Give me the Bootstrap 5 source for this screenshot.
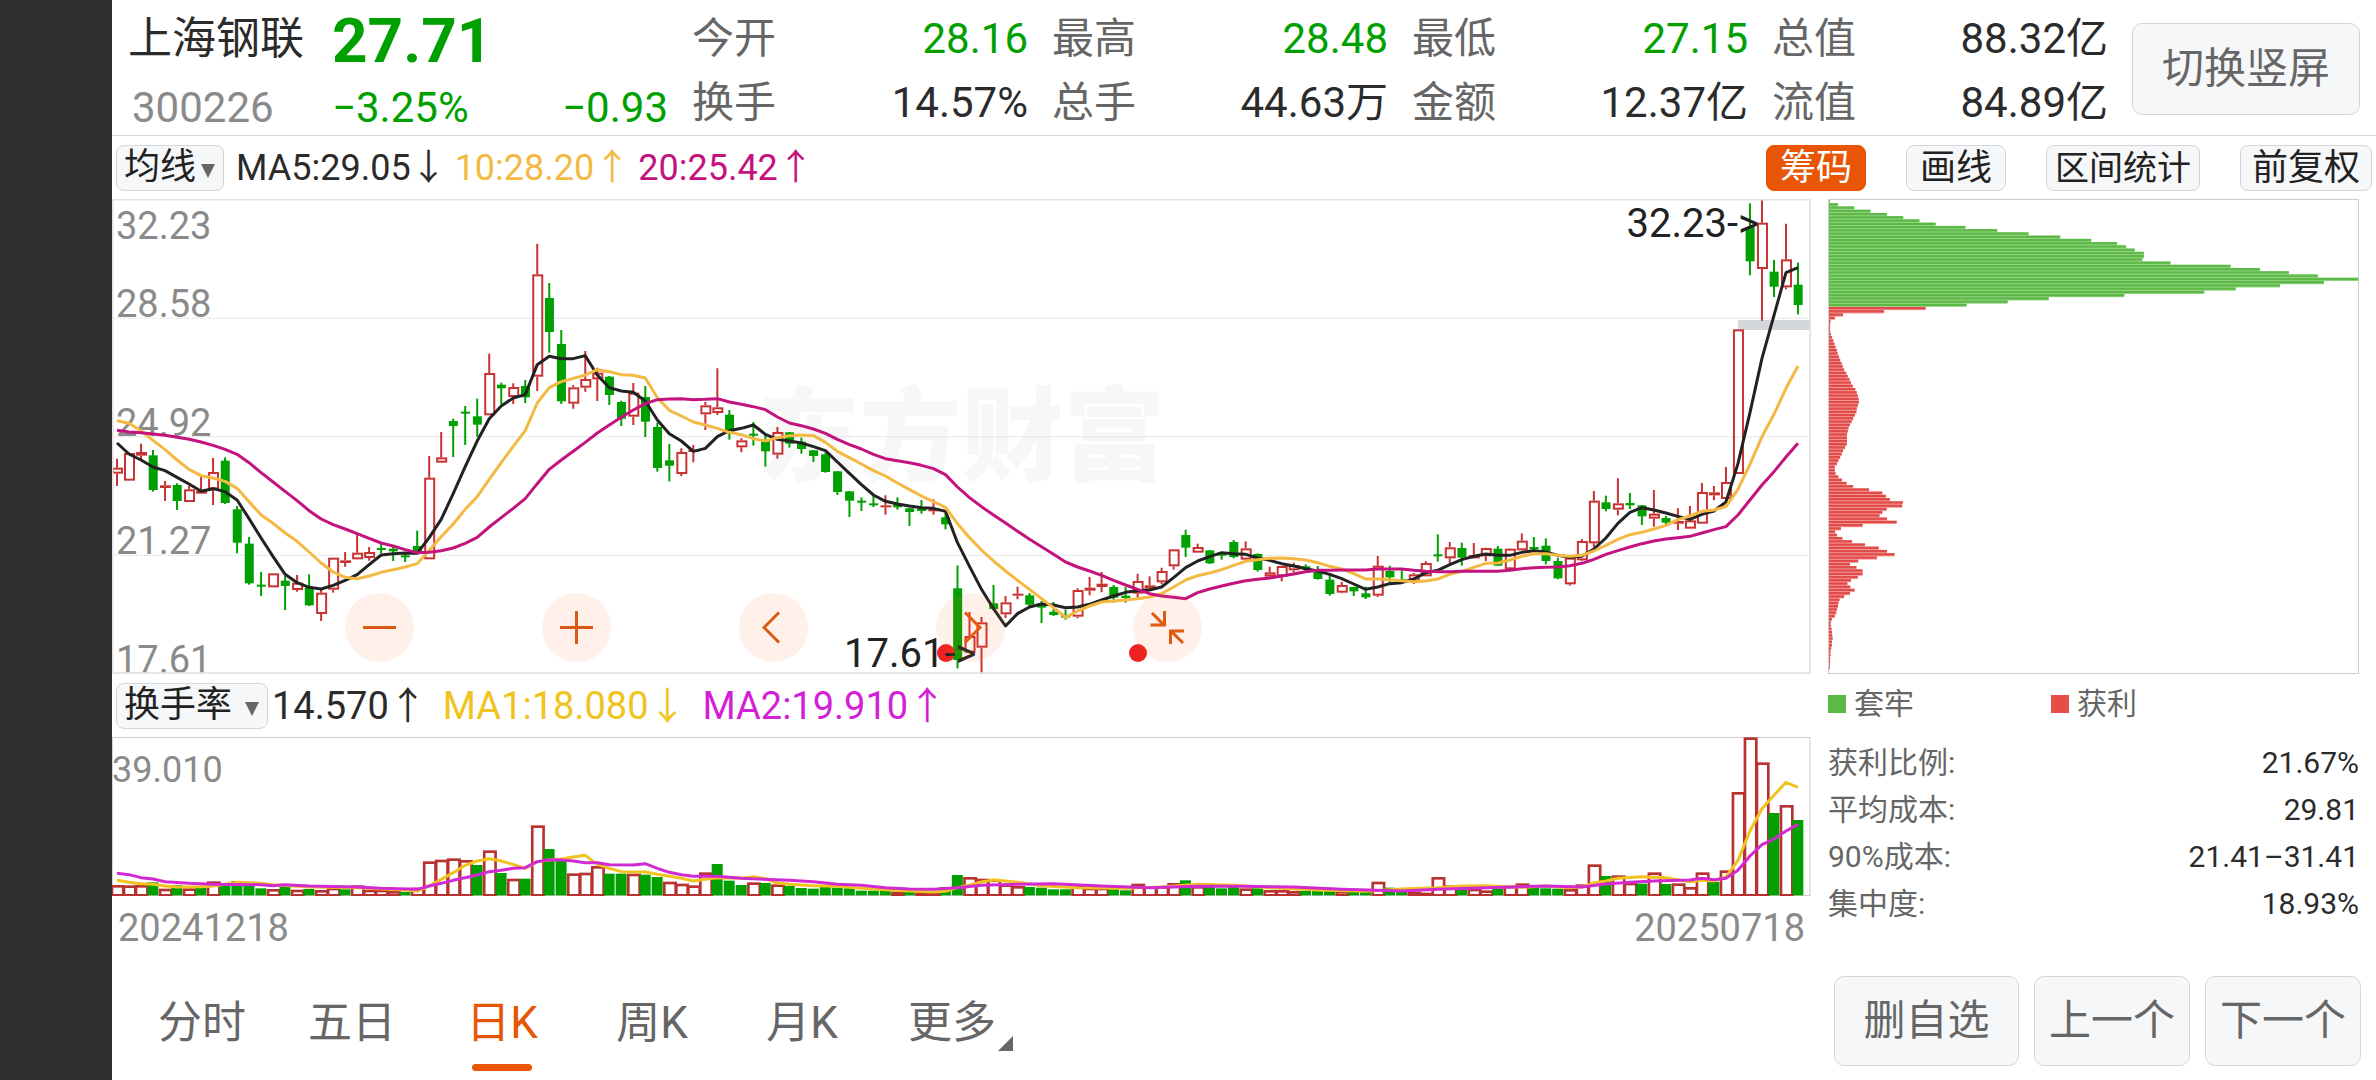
<!DOCTYPE html>
<html lang="zh-CN">
<head>
<meta charset="utf-8">
<meta name="viewport" content="width=device-width, initial-scale=1">
<title>上海钢联 300226</title>
<link rel="stylesheet" href="https://cdn.jsdelivr.net/npm/bootstrap@5.3.0/dist/css/bootstrap.min.css">
<style>
:root { --ink:#2b2b2b; --muted:#666; --axis:#8a8a8a; --down:#00a000; --up:#c83232; --accent:#e85605; }
body { font-family: Roboto, "Noto Sans CJK SC", sans-serif; color: var(--ink); background: #fff; }
.rail { width: 112px; background: #2f2f2f; }
.t-30 { font-size: 30px; line-height: 47px; }
.t-34 { font-size: 34px; }
.t-36 { font-size: 36px; line-height: 44px; }
.t-38 { font-size: 38px; line-height: 44px; }
.t-42 { font-size: 42px; line-height: 64px; }
.t-44 { font-size: 44px; line-height: 64px; }
.c-muted { color: var(--muted); }
.c-axis { color: var(--axis); }
.c-down { color: var(--down); }
.c-ma10 { color: #f4b942; }
.c-ma20 { color: #c4127f; }
.c-v5 { color: #f0c31e; }
.c-v10 { color: #d41fd8; }
.quote { height: 136px; border-bottom: 1px solid #d9d9d9; padding: 7px 16px 0 16px; gap: 24px; }
.q-name { width: 180px; }
.q-name, .q-price { display: flex; flex-direction: column; gap: 5px; }
.q-last { font-size: 62px; line-height: 64px; font-weight: 700; padding-top: 2px; margin-bottom: -2px; }
.q-cell, .q-price { width: 336px; }
.pad { background: #f6f7f9; border: 1px solid #d3d7dc; border-radius: 8px; color: var(--muted); padding: 0; }
.pad:hover { background: #eceef1; }
.pad-lg { border-radius: 10px; height: 92px; }
.w-switch { width: 228px; }
.w-del { width: 185px; }
.w-step { width: 156px; }
.tools { height: 63px; padding-right: 4px; }
.toolset { gap: 40px; }
.ma-gap { margin-right: 12px; }
.pad-sm { height: 46px; color: #222; line-height: 42px; padding: 0 13px; }
.pad-drop { padding: 0 7px; }
.pad-on { background: var(--accent); border-color: var(--accent); color: #fff; }
.pad-tight { padding: 0 8px; }
.pad-mid { padding: 0 11px; }
.plot { height: 475px; }
.plot svg, .vol svg, .chips svg { display: block; width: 100%; height: 100%; }
.vol { height: 159px; }
.vol-top { padding-top: 11px; }
.chips { height: 475px; border: 1px solid #ccc; }
.side { width: 531px; margin: 0 17px 0 17px; }
.axis-y { font-size: 38px; line-height: 28px; padding: 0 4px; }
.axis-first { padding-top: 13px; }
.mark-brand { font-size: 102px; line-height: 102px; font-weight: 900; color: #f7f7f7; left: 38%; top: 188px; }
.tip { font-size: 40px; line-height: 40px; color: #222; }
.tip-high { right: 52px; top: 5px; }
.tip-low { left: 732px; bottom: 0; }
.ctrls { left: 233px; bottom: 12px; gap: 128px; }
.round { width: 69px; height: 69px; border: 0; border-radius: 50%; padding: 0; background: rgba(255,110,40,.1); }
.dot { width: 18px; height: 18px; border-radius: 50%; background: #ee2222; bottom: 12px; }
.dot-a { left: 825px; }
.dot-b { left: 1017px; }
.subtools { height: 63px; padding: 0 4px; }
.w-legend { width: 223px; }
.legend-row { padding-top: 6px; }
.key { width: 18px; height: 18px; }
.key-g { background: #5cb946; }
.key-r { background: #e84c49; }
.facts { padding-top: 12px; }
.facts dt { font-weight: 400; }
.facts dd { margin: 0; }
.tab-k { width: 150px; border: 0; background: none; color: var(--muted); padding: 0; }
.tab-k.active { color: var(--accent); }
.tab-k .bar { width: 60px; height: 7px; border-radius: 4px; background: var(--accent); bottom: -16px; left: 45px; }
.tab-k .corner { right: 14px; bottom: 4px; }
.foot { padding: 0 15px; gap: 15px; height: 119px; }
.h-90 { height: 90px; }
.dates { height: 65px; padding: 10px 6px 0; }
</style>
</head>
<body>
<div class="d-flex min-vh-100">
  <div class="rail flex-shrink-0"></div>
  <div class="d-flex flex-column flex-grow-1">

    <header class="quote d-flex">
      <div class="q-name">
        <div class="t-44">上海钢联</div>
        <div class="t-42 c-axis ps-1">300226</div>
      </div>
      <div class="q-price c-down me-auto">
        <div class="q-last">27.71</div>
        <div class="t-42 d-flex justify-content-between"><span>−3.25%</span><span>−0.93</span></div>
      </div>
      <div class="q-cell t-42">
        <div class="d-flex justify-content-between"><span class="c-muted">今开</span><span class="c-down">28.16</span></div>
        <div class="d-flex justify-content-between"><span class="c-muted">换手</span><span>14.57%</span></div>
      </div>
      <div class="q-cell t-42">
        <div class="d-flex justify-content-between"><span class="c-muted">最高</span><span class="c-down">28.48</span></div>
        <div class="d-flex justify-content-between"><span class="c-muted">总手</span><span>44.63万</span></div>
      </div>
      <div class="q-cell t-42">
        <div class="d-flex justify-content-between"><span class="c-muted">最低</span><span class="c-down">27.15</span></div>
        <div class="d-flex justify-content-between"><span class="c-muted">金额</span><span>12.37亿</span></div>
      </div>
      <div class="q-cell t-42">
        <div class="d-flex justify-content-between"><span class="c-muted">总值</span><span>88.32亿</span></div>
        <div class="d-flex justify-content-between"><span class="c-muted">流值</span><span>84.89亿</span></div>
      </div>
      <button type="button" class="pad pad-lg w-switch t-42 mt-3">切换竖屏</button>
    </header>

    <div class="tools d-flex align-items-center justify-content-between">
      <div class="d-flex align-items-center t-36 ps-1">
        <button type="button" class="pad pad-sm pad-drop ma-gap">均线<svg class="ms-1" width="16" height="38" viewBox="0 0 16 38"><path d="M1 13h14l-7 14z" fill="#666"/></svg></button>
        <span class="me-2">MA5:29.05↓</span>
        <span class="me-2 c-ma10">10:28.20↑</span>
        <span class="c-ma20">20:25.42↑</span>
      </div>
      <div class="d-flex align-items-center t-36 toolset">
        <button type="button" class="pad pad-sm pad-on">筹码</button>
        <button type="button" class="pad pad-sm">画线</button>
        <button type="button" class="pad pad-sm pad-tight t-34">区间统计</button>
        <button type="button" class="pad pad-sm pad-mid">前复权</button>
      </div>
    </div>

    <div class="d-flex">
      <div class="flex-grow-1">
        <div class="plot position-relative">
          <div class="mark-brand position-absolute text-nowrap">东方财富</div>
          <div class="axis-y c-axis position-absolute top-0 start-0 h-100 d-flex flex-column">
            <div class="d-flex flex-column justify-content-between h-25 axis-first"><span>32.23</span><span>28.58</span></div>
            <div class="d-flex align-items-end h-25">24.92</div>
            <div class="d-flex align-items-end h-25">21.27</div>
            <div class="d-flex align-items-end h-25">17.61</div>
          </div>
          <svg id="kline" class="position-relative" viewBox="6 9 5094 1425" preserveAspectRatio="none"></svg>
          <span class="dot dot-a position-absolute"></span>
          <span class="dot dot-b position-absolute"></span>
          <span class="tip tip-high position-absolute">32.23-&gt;</span>
          <span class="tip tip-low position-absolute">17.61-&gt;</span>
          <div class="ctrls position-absolute d-flex">
            <button type="button" class="round" aria-label="缩小"><svg viewBox="0 0 69 69"><path d="M18 34.500h33" stroke="#d85a14" stroke-width="3"/></svg></button>
            <button type="button" class="round" aria-label="放大"><svg viewBox="0 0 69 69"><path d="M18 34.500h33M34.500 18v33" stroke="#d85a14" stroke-width="3"/></svg></button>
            <button type="button" class="round" aria-label="左移"><svg viewBox="0 0 69 69"><path d="M40 19.500l-15 15 15 15" fill="none" stroke="#d85a14" stroke-width="3"/></svg></button>
            <button type="button" class="round" aria-label="右移"><svg viewBox="0 0 69 69"><path d="M29 19.500l15 15-15 15" fill="none" stroke="#e85a0c" stroke-width="3"/></svg></button>
            <button type="button" class="round" aria-label="收起"><svg viewBox="0 0 69 69"><path d="M19 20l11 11M17.500 32H31M31.500 18v15.500M50 50L38 38M51 38H37M37.500 36.500V51" fill="none" stroke="#e0590c" stroke-width="3"/></svg></button>
          </div>
        </div>

        <div class="subtools d-flex align-items-center t-38">
          <button type="button" class="pad pad-sm pad-drop t-36 me-1">换手率<svg class="ms-2" width="20" height="38" viewBox="0 0 20 38"><path d="M5 13h14l-7 14z" fill="#666"/></svg></button>
          <span class="me-3">14.570↑</span>
          <span class="me-3 c-v5">MA1:18.080↓</span>
          <span class="c-v10">MA2:19.910↑</span>
        </div>

        <div class="vol position-relative">
          <div class="t-36 c-axis position-absolute top-0 start-0 vol-top">39.010</div>
          <svg id="volume" class="position-relative" viewBox="6 198 5094 477" preserveAspectRatio="none"></svg>
        </div>
        <div class="dates d-flex justify-content-between c-axis t-38"><span>20241218</span><span>20250718</span></div>
      </div>

      <div class="side flex-shrink-0">
        <div class="chips"><svg id="chips" viewBox="0 0 1469 1419" preserveAspectRatio="none"></svg></div>
        <div class="legend-row d-flex align-items-center t-30 c-muted">
          <div class="w-legend d-flex align-items-center"><span class="key key-g me-2"></span>套牢</div>
          <div class="d-flex align-items-center"><span class="key key-r me-2"></span>获利</div>
        </div>
        <dl class="t-30 mb-0 facts">
          <div class="d-flex justify-content-between"><dt class="c-muted">获利比例:</dt><dd>21.67%</dd></div>
          <div class="d-flex justify-content-between"><dt class="c-muted">平均成本:</dt><dd>29.81</dd></div>
          <div class="d-flex justify-content-between"><dt class="c-muted">90%成本:</dt><dd>21.41–31.41</dd></div>
          <div class="d-flex justify-content-between"><dt class="c-muted">集中度:</dt><dd>18.93%</dd></div>
        </dl>
      </div>
    </div>

    <footer class="foot d-flex align-items-center">
      <nav class="d-flex me-auto t-44 pt-1">
        <button type="button" class="tab-k">分时</button>
        <button type="button" class="tab-k">五日</button>
        <button type="button" class="tab-k active position-relative">日K<span class="bar position-absolute"></span></button>
        <button type="button" class="tab-k">周K</button>
        <button type="button" class="tab-k">月K</button>
        <button type="button" class="tab-k position-relative">更多<svg class="corner position-absolute" width="15" height="15" viewBox="0 0 15 15"><path d="M15 0v15H0z" fill="#666"/></svg></button>
      </nav>
      <button type="button" class="pad pad-lg h-90 w-del t-42">删自选</button>
      <button type="button" class="pad pad-lg h-90 w-step t-42">上一个</button>
      <button type="button" class="pad pad-lg h-90 w-step t-42">下一个</button>
    </footer>
  </div>
</div>

<script src="https://cdn.jsdelivr.net/npm/bootstrap@5.3.0/dist/js/bootstrap.bundle.min.js"></script>
<script>
// One candle per entry: colour, high, body top, body bottom, low (plot units, y down).
const candles = `R 788 815 833 870,R 770 771 854 854,R 743 768 779 790,G 762 778 882 887,R 855 868 876 915,G 862 867 915 942,R 870 880 918 918,R 838 885 893 893,R 786 828 880 927,G 784 794 921 924,
G 930 940 1040 1072,G 1023 1043 1162 1166,G 1128 1166 1172 1200,R 1132 1132 1174 1174,G 1140 1154 1170 1242,R 1137 1160 1182 1187,G 1135 1175 1228 1230,R 1180 1190 1254 1275,R 1085 1085 1181 1190,R 1068 1093 1101 1112,
R 1017 1070 1090 1090,R 1053 1068 1086 1094,G 1042 1056 1062 1072,G 1052 1058 1066 1095,G 1072 1078 1084 1098,G 1004 1050 1072 1072,R 780 845 1090 1090,R 708 784 800 800,G 668 675 690 783,G 630 647 653 747,
G 608 661 686 722,R 473 531 658 658,G 560 566 577 625,R 562 573 603 624,G 552 570 604 621,R 143 235 542 585,G 261 306 408 470,G 402 444 616 624,R 567 574 623 638,R 465 549 575 587,
R 515 530 550 615,G 540 542 597 627,G 614 618 668 690,R 561 590 662 687,G 570 603 677 723,G 680 693 816 827,G 744 793 809 856,R 757 768 834 841,R 747 761 768 799,R 618 628 655 702,
R 517 634 651 657,G 642 656 712 731,R 727 733 754 769,G 678 713 719 749,G 715 733 766 812,R 693 708 776 788,G 708 709 743 755,G 725 737 759 773,G 762 763 780 798,G 770 775 828 830,
G 825 826 888 897,G 885 886 914 963,G 904 914 920 945,G 895 922 928 933,R 898 928 934 956,G 904 925 934 941,G 935 937 948 990,G 912 938 945 953,R 910 936 946 956,G 950 964 985 1000,
G 1108 1177 1392 1417,R 1248 1320 1370 1370,R 1263 1279 1355 1435,G 1167 1222 1239 1243,R 1200 1219 1255 1266,R 1172 1193 1199 1210,G 1191 1198 1226 1231,G 1215 1223 1235 1281,G 1218 1247 1257 1260,G 1241 1257 1265 1271,
R 1177 1182 1262 1267,R 1143 1175 1184 1198,R 1128 1163 1173 1189,G 1167 1173 1205 1220,G 1173 1199 1206 1220,R 1133 1155 1193 1205,R 1141 1168 1178 1178,R 1115 1125 1159 1165,R 1060 1060 1111 1121,G 1001 1017 1055 1083,
R 1043 1053 1070 1070,G 1062 1063 1102 1104,G 1070 1073 1078 1091,G 1032 1038 1083 1087,R 1036 1057 1091 1091,G 1072 1074 1122 1127,R 1112 1129 1142 1145,R 1110 1110 1141 1156,R 1100 1107 1123 1130,G 1105 1111 1119 1129,
G 1110 1119 1149 1151,G 1135 1151 1194 1199,R 1157 1167 1190 1192,G 1172 1173 1186 1200,G 1172 1192 1204 1209,R 1080 1109 1199 1203,G 1109 1125 1144 1160,G 1123 1149 1155 1159,R 1131 1135 1156 1164,R 1095 1101 1141 1141,
G 1015 1075 1081 1097,R 1038 1054 1087 1104,G 1040 1056 1085 1109,R 1041 1077 1087 1088,R 1055 1056 1081 1095,G 1050 1058 1109 1110,R 1057 1058 1120 1120,R 1012 1034 1063 1063,G 1023 1053 1060 1067,G 1027 1049 1095 1105,
G 1085 1095 1147 1150,R 1085 1085 1165 1169,R 1029 1035 1093 1095,R 885 914 1042 1053,G 899 919 939 946,R 847 922 941 958,G 891 921 928 939,G 927 928 961 987,R 882 953 968 992,G 960 966 980 985,
R 937 975 983 1002,R 930 973 998 998,R 861 888 983 983,R 870 889 898 913,R 813 858 909 909,R 400 400 834 834,G 22 93 196 238,R 12 80 219 374,G 192 227 272 303,R 83 190 274 280,G 200 266 327 355`
  .split(',').map(s => s.trim().split(' ')).map(a => [a[0], ...a.slice(1).map(Number)]);

const ma5 = [741,774,792,813,824,844,864,886,878,887,912,968,1026,1082,1135,1160,1174,1179,1168,1153,1136,1106,1077,1073,1071,1072,1025,970,893,812,735,668,630,606,596,506,481,488,488,479,537,575,585,589,615,672,713,735,766,757,722,704,697,687,715,730,735,741,752,764,798,832,866,897,916,924,930,935,937,946,1040,1111,1180,1238,1290,1253,1233,1224,1227,1235,1233,1225,1212,1200,1189,1184,1182,1173,1145,1115,1095,1082,1070,1073,1075,1086,1093,1103,1110,1118,1125,1135,1148,1164,1180,1173,1163,1160,1149,1130,1123,1106,1091,1081,1074,1078,1078,1069,1064,1068,1078,1084,1081,1059,1026,982,949,935,942,951,961,970,955,945,918,803,650,487,358,230,215];
const ma10 = [674,682,704,733,761,792,820,839,846,856,877,917,957,982,1011,1036,1068,1101,1128,1144,1148,1140,1129,1121,1113,1103,1063,1022,984,940,902,850,800,751,704,621,575,557,547,537,521,527,536,538,546,605,643,660,678,687,697,709,716,728,735,725,719,717,719,739,766,785,804,824,840,861,881,900,917,934,983,1025,1062,1095,1125,1153,1180,1208,1235,1264,1245,1230,1218,1215,1212,1208,1203,1193,1173,1152,1139,1131,1121,1108,1096,1091,1087,1086,1088,1092,1100,1111,1119,1133,1149,1149,1151,1154,1157,1155,1149,1135,1126,1114,1102,1101,1092,1081,1073,1073,1078,1081,1078,1065,1048,1030,1016,1009,999,988,971,960,946,942,932,880,805,722,655,577,510];
const ma20 = [703,708,710,714,718,724,730,738,748,760,775,800,830,858,886,914,944,969,986,999,1013,1027,1041,1050,1061,1070,1069,1064,1056,1042,1024,993,965,937,908,863,820,792,766,739,711,687,664,642,623,611,609,608,611,610,608,618,625,632,641,663,681,689,699,712,730,746,759,775,788,794,800,808,818,836,873,905,932,957,981,1006,1030,1052,1075,1098,1113,1125,1138,1153,1167,1180,1193,1200,1204,1208,1190,1179,1170,1162,1154,1150,1146,1140,1134,1127,1123,1123,1122,1122,1122,1119,1119,1119,1123,1126,1127,1127,1126,1126,1126,1126,1123,1118,1115,1114,1113,1109,1102,1090,1075,1064,1053,1043,1035,1029,1025,1021,1011,1001,992,957,912,867,827,783,742];

// Turnover bars: colour and bar top.
const bars = `R642 R643 R642 G634 R653 G642 R652 G648 R631 G645 G630 G640 G652 R654 G648 R656 G654 R657 R650 G655 R643 R656 R656 R660 G663 R650 R571 R566 R562 R567 G582 R538 G606 R623 G623 R463 G534 G568 R607 R605 R585 G608 G608 R608 G611 G618 R632 R638 R643 R604 G579 G629 G642 R634 G636 R640 G645 G651 G653 G648 G650 G652 G659 G659 G656 R662 G657 R663 R662 G648 G612 R618 R623 R625 R640 R645 G648 G650 G655 G655 R645 R650 R650 G655 G658 R638 R645 R645 R636 G628 R645 G645 G652 G646 R652 G652 R657 R657 R660 G660 G660 G655 R660 G663 G663 R632 G650 G660 R662 R665 R618 R643 G653 R653 R658 G653 R644 R637 G650 G652 G653 R654 R640 R580 G615 R613 R635 G638 R604 G639 R637 R648 R604 G633 R598 R363 R199 R274 G426 R402 G447`.split(' ');
const v5 = '0:628 1:634 2:638 3:640 4:645 5:648 7:647 8:645 9:640 10:634 11:635 12:637 13:641 16:648 20:650 24:657 25:660 26:645 27:625 28:605 29:583 30:570 31:563 32:570 33:580 34:592 35:572 36:567 37:564 38:558 39:553 40:580 41:592 42:602 44:603 45:610 46:616 47:622 48:630 49:625 50:620 52:622 53:617 54:623 55:636 56:640 58:644 60:646 62:652 64:656 66:660 68:663 69:661 70:650 71:642 72:633 73:626 75:634 77:644 80:650 84:652 87:648 90:640 93:643 96:650 100:657 104:661 107:654 110:650 112:645 114:644 117:649 119:645 121:650 122:648 123:636 124:630 125:622 127:617 129:620 131:632 132:628 133:630 134:618 135:568 136:480 137:413 138:373 139:334 140:349';
const v10 = '0:607 1:611 2:620 3:624 4:632 6:637 8:640 12:641 13:644 14:641 16:645 20:648 22:652 25:655 26:645 27:637 28:628 29:620 30:612 31:602 32:598 33:592 34:590 35:572 36:566 37:567 38:570 39:575 40:575 41:581 43:582 44:578 45:592 46:604 47:611 48:616 50:616 52:622 56:628 58:632 60:640 62:643 64:650 66:654 68:655 70:650 72:643 75:640 78:638 82:645 86:650 90:646 94:646 98:648 102:655 107:660 110:655 114:650 117:647 119:645 122:648 124:639 126:634 128:630 131:627 132:622 133:626 134:622 135:598 136:555 137:521 138:504 139:480 140:460';

// Cost distribution, top to bottom; the first 33 price levels are above the current price.
const cost = [2,25,70,115,161,206,251,296,379,467,554,642,728,800,825,849,874,875,870,948,1115,1197,1277,1357,1469,1374,1252,1129,1042,820,610,496,382,268,153,39,16,4,3,3,3,5,8,12,15,18,22,24,28,31,35,38,42,48,52,57,61,66,73,77,80,82,83,80,77,76,72,67,63,58,54,52,50,50,50,49,44,39,35,31,26,22,16,16,18,26,36,49,67,111,148,158,169,205,203,160,148,140,161,188,93,33,17,22,37,64,100,138,161,182,133,81,58,76,93,93,80,61,51,59,71,58,42,29,26,25,22,20,16,8,5,5,7,8,9,10,8,8,6,4,4,3,3,2,2];

const X = i => 21 + 36 * i, RED = '#c83232', GREEN = '#00a000';
const line = (pts, c, w) => `<polyline points="${pts}" fill="none" stroke="${c}" stroke-width="${w}" stroke-linejoin="round"/>`;
const series = a => a.map((y, i) => X(i) + ',' + y).join(' ');
const sparse = s => s.split(' ').map(p => p.split(':')).map(([i, y]) => X(+i) + ',' + y).join(' ');

let k = '';
for (const y of [367, 722, 1078]) k += `<path d="M6 ${y}H5100" stroke="#cfcfcf" stroke-width="3" stroke-dasharray="4 4"/>`;
k += '<rect x="4881" y="372" width="216" height="30" fill="#d3d6da"/>';
candles.forEach(([c, h, t, b, l], i) => {
  const x = X(i);
  if (c === 'G') {
    k += `<path d="M${x} ${h}V${l}" stroke="${GREEN}" stroke-width="6"/><rect x="${x - 13}" y="${t}" width="27" height="${Math.max(b - t, 6)}" fill="${GREEN}"/>`;
  } else {
    k += `<path d="M${x} ${h}V${t}M${x} ${b}V${l}" stroke="${RED}" stroke-width="6"/>`;
    k += b - t < 13 ? `<rect x="${x - 15}" y="${t}" width="33" height="${b - t}" fill="${RED}"/>`
      : `<rect x="${x - 12}" y="${t + 3}" width="27" height="${b - t - 6}" fill="none" stroke="${RED}" stroke-width="6"/>`;
  }
});
k += line(series(ma5), '#222', 9) + line(series(ma10), '#f4b942', 9) + line(series(ma20), '#c4127f', 9);
k += '<rect x="8" y="11" width="5089" height="1420" fill="none" stroke="#e2e2e2" stroke-width="5"/>';
document.getElementById('kline').innerHTML = k;

let v = '<rect x="7" y="199.500" width="5090" height="474" fill="none" stroke="#ccc" stroke-width="3"/>';
bars.forEach((s, i) => {
  const x = X(i), t = +s.slice(1);
  v += s[0] === 'G' ? `<rect x="${x - 17}" y="${t}" width="33" height="${673 - t}" fill="${GREEN}"/>`
    : `<rect x="${x - 15}" y="${t + 4}" width="34" height="${Math.max(669 - t, 2)}" fill="#fff" stroke="#b83232" stroke-width="8"/>`;
});
v += line(sparse(v5), '#f0c31e', 9) + line(sparse(v10), '#d22ad2', 9);
document.getElementById('volume').innerHTML = v;

const step = 9.72;
document.getElementById('chips').innerHTML = cost.map((w, i) => {
  const up = i < 33, y = (i * step).toFixed(1);
  return `<rect y="${y}" width="${w}" height="${step}" fill="${up ? '#94d486' : '#f59a98'}"/><rect y="${y}" width="${w}" height="7" fill="${up ? '#5cb946' : '#e04a48'}"/>`;
}).join('');
</script>
</body>
</html>
